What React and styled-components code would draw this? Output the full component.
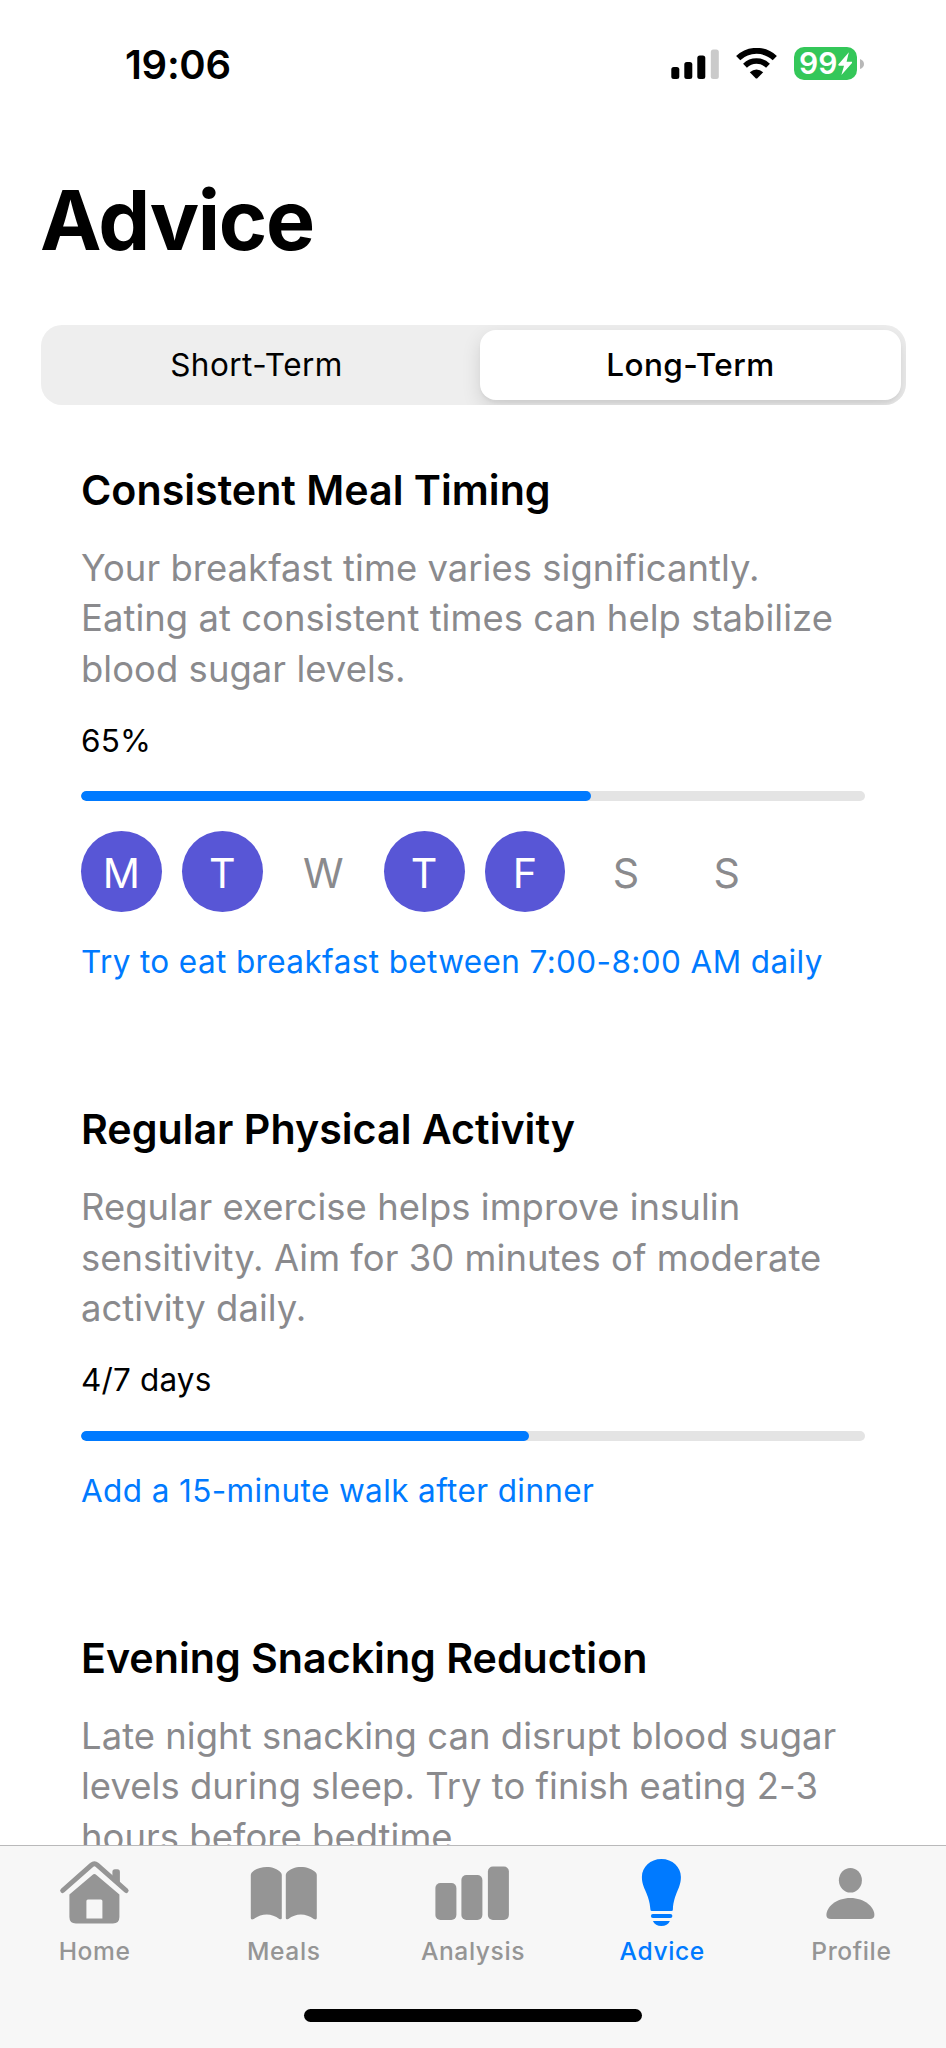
import React from "react";
import styled, { createGlobalStyle } from "styled-components";

const GlobalStyle = createGlobalStyle`
  *, *::before, *::after { box-sizing: border-box; }
  html, body { margin: 0; padding: 0; background: #fff; }
  body { font-family: Inter, "Liberation Sans", sans-serif; color: #000; -webkit-font-smoothing: antialiased; }
  h1, h2, p { margin: 0; }
  button { border: 0; padding: 0; background: none; font: inherit; color: inherit; }
`;

const Screen = styled.div`
  width: 946px;
  height: 2048px;
  display: flex;
  flex-direction: column;
  background: #fff;
  overflow: hidden;
`;

const StatusBar = styled.header`
  height: 127px;
  flex: none;
  display: flex;
  justify-content: space-between;
  align-items: center;
  padding: 0 82px 0 125px;
`;

const Clock = styled.span`
  padding-top: 3px;
  font-size: 40px;
  line-height: 50px;
  font-weight: 600;
  letter-spacing: -0.3px;
`;

const StatusIcons = styled.div`
  display: flex;
  align-items: center;
  svg { display: block; }
`;

const SignalIcon = styled.svg`
  margin-right: 16px;
`;

const WifiIcon = styled.svg`
  margin-right: 16px;
`;

const Battery = styled.div`
  width: 63px;
  height: 33px;
  border-radius: 10px;
  background: #34c759;
  color: #fff;
  display: flex;
  align-items: center;
  justify-content: center;
  font-size: 30px;
  line-height: 33px;
  font-weight: 600;
  letter-spacing: 0.1px;
`;

const BatteryCap = styled.svg`
  margin-left: 3px;
`;

const Title = styled.h1`
  flex: none;
  padding-left: 40px;
  margin-top: 43px;
  font-size: 82.5px;
  line-height: 100px;
  font-weight: 700;
  letter-spacing: -1.4px;
`;

const Segments = styled.div`
  flex: none;
  height: 80px;
  margin: 55px 40px 0 41px;
  padding: 5px;
  border-radius: 21px;
  background: #eeeeee;
  display: flex;
  gap: 13px;
  overflow: hidden;
`;

const Segment = styled.button`
  flex: 1;
  border-radius: 16px;
  font-size: 31.5px;
  line-height: 40px;
  letter-spacing: ${(p) => (p.$active ? "0.4px" : "0.45px")};
  font-weight: ${(p) => (p.$active ? 500 : 400)};
  background: ${(p) => (p.$active ? "#fff" : "transparent")};
  box-shadow: ${(p) => (p.$active ? "0 7px 19px rgba(0,0,0,.12), 0 3px 3px rgba(0,0,0,.04)" : "none")};
`;

const Feed = styled.main`
  flex: 1;
  min-height: 0;
  overflow: hidden;
  padding: 59.6px 81px 0;
  display: flex;
  flex-direction: column;
  gap: 122px;
`;

const Card = styled.section`
  flex: none;
  display: flex;
  flex-direction: column;
`;

const CardTitle = styled.h2`
  font-size: 41.2px;
  line-height: 50px;
  font-weight: 600;
  letter-spacing: 0;
`;

const CardText = styled.p`
  margin-top: 28px;
  font-size: 36.4px;
  line-height: 50.6px;
  letter-spacing: 0.06px;
  color: #8a8a8d;
  white-space: pre-line;
`;

const Measure = styled.p`
  margin-top: 26.5px;
  font-size: 31.5px;
  line-height: 40px;
  letter-spacing: 0.15px;
`;

const Track = styled.div`
  margin-top: 30.3px;
  height: 10px;
  border-radius: 5px;
  background: #e4e4e4;
  overflow: hidden;
`;

const Fill = styled.div`
  height: 100%;
  border-radius: 5px;
  background: #007aff;
`;

const Week = styled.div`
  margin-top: 30px;
  display: flex;
  gap: 20px;
`;

const Day = styled.span`
  width: 80.9px;
  height: 80.9px;
  padding-top: 2px;
  border-radius: 50%;
  display: flex;
  align-items: center;
  justify-content: center;
  font-size: 41.2px;
  background: ${(p) => (p.$on ? "#5856d6" : "transparent")};
  color: ${(p) => (p.$on ? "#fff" : "#8a8a8d")};
`;

const Tip = styled.p`
  margin-top: 30px;
  font-size: 31.5px;
  line-height: 40px;
  letter-spacing: 0.38px;
  color: #007aff;
`;

const BottomBar = styled.footer`
  flex: none;
  height: 203px;
  border-top: 1px solid #b9b9ba;
  background: #f7f7f7;
  display: flex;
  flex-direction: column;
  align-items: center;
`;

const Tabs = styled.nav`
  width: 100%;
  display: flex;
  padding-top: 10px;
`;

const Tab = styled.button`
  flex: 1;
  display: flex;
  flex-direction: column;
  align-items: center;
  color: ${(p) => (p.$active ? "#007aff" : "#959595")};
  svg { display: block; fill: currentColor; }
`;

const TabLabel = styled.span`
  margin-top: 5.5px;
  font-size: 24.6px;
  line-height: 30px;
  font-weight: 500;
  letter-spacing: 0.6px;
`;

const HomeIndicator = styled.div`
  width: 338px;
  height: 13px;
  border-radius: 7px;
  margin-top: 43.5px;
  background: #000;
`;

/* Tab icons share an 80x74 canvas so that their labels line up. */
const icons = {
  home: (
    <svg width="80" height="74" viewBox="0.6 0 80 74">
      <path
        d="M8.3 34.5 37.3 8.9Q40 6.6 42.7 8.9L71.7 34.5"
        fill="none" stroke="currentColor" strokeWidth="5" strokeLinecap="round"
      />
      <path d="M58 24V16Q58 13.300 60.500 13.300H63Q65.500 13.300 65.500 16V31Z" />
      <path
        fillRule="evenodd"
        d="M38 19Q40 17.200 42 19L65 38.500V61Q65 67.500 58.500 67.500H21.500Q15 67.500 15 61V38.500ZM33.500 43.500Q32 43.500 32 45V62.500H48V45Q48 43.500 46.500 43.500Z"
      />
    </svg>
  ),
  meals: (
    <svg width="80" height="74" viewBox="0.2 0 80 74">
      <path d="M7 19Q7 17.500 8 16.500C15 9 31 9 37 16.500Q38 17.500 38 19V62Q38 64 35.500 63C28 57 18 57 10 63Q7 64.300 7 62Z" />
      <path d="M42 19Q42 17.500 43 16.500C49 9 65 9 72 16.500Q73 17.500 73 19V62Q73 64.300 70 63C62 57 52 57 44.500 63Q42 64 42 62Z" />
    </svg>
  ),
  analysis: (
    <svg width="80" height="74" viewBox="0.6 0 80 74">
      <rect x="3" y="27" width="21" height="37" rx="5" />
      <rect x="29" y="19" width="21" height="45" rx="5" />
      <rect x="55.500" y="10.500" width="21" height="53.500" rx="5" />
    </svg>
  ),
  advice: (
    <svg width="80" height="74" viewBox="0.6 0 80 74">
      <path d="M40 3C51 3 59.500 11 59.500 21C59.500 33 52.500 37 51.500 53.500Q51.500 55 50 55H30.500Q29 55 29 53.500C28 37 20.500 33 20.500 21C20.500 11 29 3 40 3Z" />
      <rect x="29.500" y="58" width="21.500" height="4" rx="2" />
      <path d="M31.500 65H48.500C47 68.500 44 70 40 70S33 68.500 31.500 65Z" />
    </svg>
  ),
  profile: (
    <svg width="80" height="74" viewBox="0.6 0 80 74">
      <ellipse cx="40" cy="24.300" rx="11.500" ry="12.300" />
      <path d="M16 59C16 51 26 42 40 42S64 51 64 59Q64 63 59.500 63H20.500Q16 63 16 59Z" />
    </svg>
  ),
};

const tabs = [
  { id: "home", label: "Home" },
  { id: "meals", label: "Meals" },
  { id: "analysis", label: "Analysis" },
  { id: "advice", label: "Advice" },
  { id: "profile", label: "Profile" },
];

const cards = [
  {
    title: "Consistent Meal Timing",
    text: "Your breakfast time varies significantly.\nEating at consistent times can help stabilize\nblood sugar levels.",
    measure: "65%",
    value: 0.65,
    week: [["M", true], ["T", true], ["W", false], ["T", true], ["F", true], ["S", false], ["S", false]],
    tip: "Try to eat breakfast between 7:00-8:00 AM daily",
  },
  {
    title: "Regular Physical Activity",
    text: "Regular exercise helps improve insulin\nsensitivity. Aim for 30 minutes of moderate\nactivity daily.",
    measure: "4/7 days",
    value: 4 / 7,
    tip: "Add a 15-minute walk after dinner",
  },
  {
    title: "Evening Snacking Reduction",
    text: "Late night snacking can disrupt blood sugar\nlevels during sleep. Try to finish eating 2-3\nhours before bedtime.",
  },
];

function Status() {
  return (
    <StatusBar>
      <Clock>19:06</Clock>
      <StatusIcons>
        <SignalIcon width="48" height="30" viewBox="0 0 48 30">
          <rect x="0.300" y="18" width="8" height="12" rx="2.500" />
          <rect x="13.300" y="13" width="8" height="17" rx="2.500" />
          <rect x="26.300" y="6.500" width="8" height="23.500" rx="2.500" />
          <rect x="39.800" y="0.500" width="8" height="29.500" rx="2.500" fill="#cacaca" />
        </SignalIcon>
        <WifiIcon width="43" height="31" viewBox="0 0 43 31">
          <path d="M3.200 10.200A26.500 26.500 0 0 1 39.800 10.200" fill="none" stroke="#000" strokeWidth="6" />
          <path d="M10 17.700A16.500 16.500 0 0 1 33 17.700" fill="none" stroke="#000" strokeWidth="5.500" />
          <path d="M14.800 24.200Q21.500 19 28.200 24.200L22.600 30Q21.500 31 20.400 30Z" />
        </WifiIcon>
        <Battery>
          99
          <svg width="14.500" height="23" viewBox="0 0 14 21.500" preserveAspectRatio="none">
            <path d="M10.500 0.300 0.300 11.600Q0 12.800 1.300 12.800H5.800L3.300 21.500 13.700 10.200Q14 9 12.700 9H8.300Z" fill="#fff" />
          </svg>
        </Battery>
        <BatteryCap width="4" height="10" viewBox="0 0 4 10">
          <path d="M0 0Q4 1.500 4 5T0 10Z" fill="#b8b8b8" />
        </BatteryCap>
      </StatusIcons>
    </StatusBar>
  );
}

function AdviceCard({ title, text, measure, value, week, tip }) {
  return (
    <Card>
      <CardTitle>{title}</CardTitle>
      <CardText>{text}</CardText>
      {measure && <Measure>{measure}</Measure>}
      {value !== undefined && (
        <Track>
          <Fill style={{ width: `${value * 100}%` }} />
        </Track>
      )}
      {week && (
        <Week>
          {week.map(([day, on], i) => (
            <Day key={i} $on={on}>{day}</Day>
          ))}
        </Week>
      )}
      {tip && <Tip>{tip}</Tip>}
    </Card>
  );
}

export default function App() {
  return (
    <Screen>
      <GlobalStyle />
      <Status />
      <Title>Advice</Title>
      <Segments>
        <Segment>Short-Term</Segment>
        <Segment $active>Long-Term</Segment>
      </Segments>
      <Feed>
        {cards.map((card) => (
          <AdviceCard key={card.title} {...card} />
        ))}
      </Feed>
      <BottomBar>
        <Tabs>
          {tabs.map((tab) => (
            <Tab key={tab.id} $active={tab.id === "advice"}>
              {icons[tab.id]}
              <TabLabel>{tab.label}</TabLabel>
            </Tab>
          ))}
        </Tabs>
        <HomeIndicator />
      </BottomBar>
    </Screen>
  );
}
